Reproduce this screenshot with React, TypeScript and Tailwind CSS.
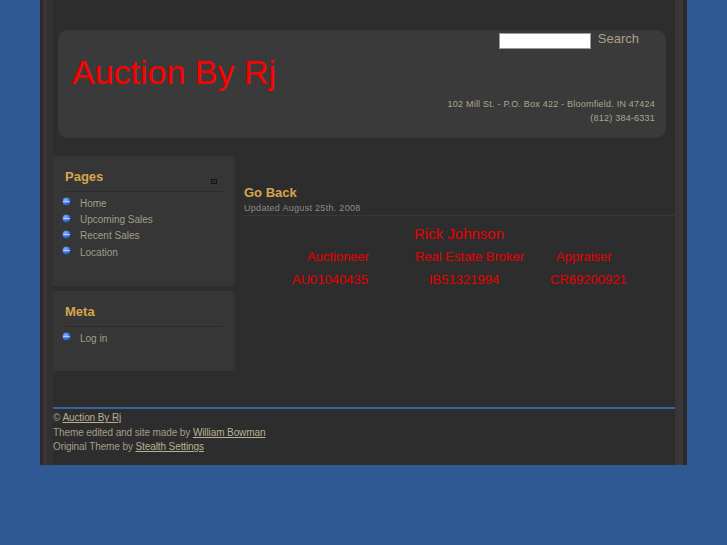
import React from 'react'

const pages = ['Home', 'Upcoming Sales', 'Recent Sales', 'Location']

function Bullet() {
  return (
    <svg width="9" height="9" viewBox="0 0 9 9" className="shrink-0">
      <defs>
        <radialGradient id="bl" cx="0.4" cy="0.35" r="0.7">
          <stop offset="0" stopColor="#8fb8ff" />
          <stop offset="0.6" stopColor="#3a72e0" />
          <stop offset="1" stopColor="#1d49a8" />
        </radialGradient>
      </defs>
      <circle cx="4.5" cy="4.5" r="4" fill="url(#bl)" />
      <rect x="1" y="4" width="7" height="1.2" fill="#d8e6ff" opacity="0.7" />
    </svg>
  )
}

function Widget({ title, items, icon, height }: { title: string; items: string[]; icon?: boolean; height: string }) {
  return (
    <div className={`bg-[#363636] rounded-r-[5px] pl-[12px] pr-[13px] pt-[13px] ${height}`}>
      <div className="flex items-end justify-between pb-[6px] border-b border-[#2b2b2b]">
        <span className="text-[13px] leading-[16px] font-bold text-[#d9a54c]">{title}</span>
        {icon && (
          <svg width="6" height="5" viewBox="0 0 6 5" className="mb-[1px] mr-[5px]">
            <rect x="0.5" y="0.5" width="5" height="4" fill="none" stroke="#151515" />
            <rect x="2" y="2" width="2" height="1" fill="#151515" />
          </svg>
        )}
      </div>
      <ul className="mt-[3px]">
        {items.map((it) => (
          <li key={it} className="flex items-center h-[16.4px]">
            <span className="-ml-[3px] -mt-[3px]"><Bullet /></span>
            <span className="ml-[9px] text-[10px] text-[#a39d88]">{it}</span>
          </li>
        ))}
      </ul>
    </div>
  )
}

export default function App() {
  return (
    <div className="min-h-[545px] bg-[#2f5992] font-['Liberation_Sans',Arial,sans-serif]">
      <div className="ml-[40px] w-[647px] h-[465px] flex">
        {/* left frame */}
        <div className="w-[3px] bg-[#2b2b2b]" />
        <div className="w-[4px] bg-[#3d3437]" />
        <div className="w-[6px] bg-[#313131]" />

        <div className="flex-1 bg-[#2d2d2d] pt-[30px]">
          {/* header */}
          <div className="ml-[5px] mr-[9px] h-[108px] rounded-[10px] bg-[#3a3a3a] pt-[3px]">
            <div className="flex justify-end items-center gap-[7px] pr-[27px]">
              <div className="w-[92px] h-[16px] bg-white border border-[#9a9a9a]" />
              <span className="text-[13px] leading-[16px] text-[#a8a284] -mt-[5px]">Search</span>
            </div>
            <h1 className="mt-[6px] ml-[14px] text-[34px] leading-[34px] text-[#ff0000]">Auction By Rj</h1>
            <div className="mt-[8px] pr-[11px] text-right text-[9px] leading-[14px] tracking-[0.22px] text-[#aca68e]">
              <p>102 Mill St. - P.O. Box 422 - Bloomfield. IN 47424</p>
              <p>(812) 384-6331</p>
            </div>
          </div>

          {/* columns */}
          <div className="mt-[18px] flex">
            <aside className="w-[182px] flex flex-col gap-[5px]">
              <Widget title="Pages" items={pages} icon height="h-[130px]" />
              <Widget title="Meta" items={['Log in']} height="h-[80px]" />
            </aside>

            <main className="ml-[8px] flex-1">
              <div className="mt-[29px] pl-[1px] border-b border-[#383838] pb-[1px]">
                <h2 className="text-[13px] leading-[16px] font-bold text-[#d9a54c]">Go Back</h2>
                <p className="mt-[1px] text-[9px] leading-[12px] tracking-[0.3px] text-[#8c8c8c]">Updated August 25th. 2008</p>
              </div>
              <div className="text-[#e80000]">
                <p className="mt-[9px] text-center text-[15px] leading-[18px]">Rick Johnson</p>
                <div className="mt-[6px] flex pl-[64px] text-[13px] leading-[16px]">
                  <span className="w-[108px]">Auctioneer</span>
                  <span className="w-[141px]">Real Estate Broker</span>
                  <span>Appraiser</span>
                </div>
                <div className="mt-[7px] flex pl-[49px] text-[13px] leading-[16px]">
                  <span className="w-[137px]">AU01040435</span>
                  <span className="w-[121px]">IB51321994</span>
                  <span>CR69200921</span>
                </div>
              </div>
            </main>
          </div>

          {/* footer */}
          <div className="mt-[36px] h-[2px] bg-[#3a62a0]" />
          <div className="mt-[2px] text-[10px] leading-[14.5px] tracking-[-0.1px] text-[#a39d88]">
            <p>© <a className="underline text-[#b8b092]">Auction By Rj</a></p>
            <p>Theme edited and site made by <a className="underline text-[#b8b092]">William Bowman</a></p>
            <p>Original Theme by <a className="underline text-[#b8b092]">Stealth Settings</a></p>
          </div>
        </div>

        {/* right frame */}
        <div className="w-[4px] bg-[#363636]" />
        <div className="w-[4px] bg-[#40373a]" />
        <div className="w-[4px] bg-[#2b2b2b]" />
      </div>
    </div>
  )
}
